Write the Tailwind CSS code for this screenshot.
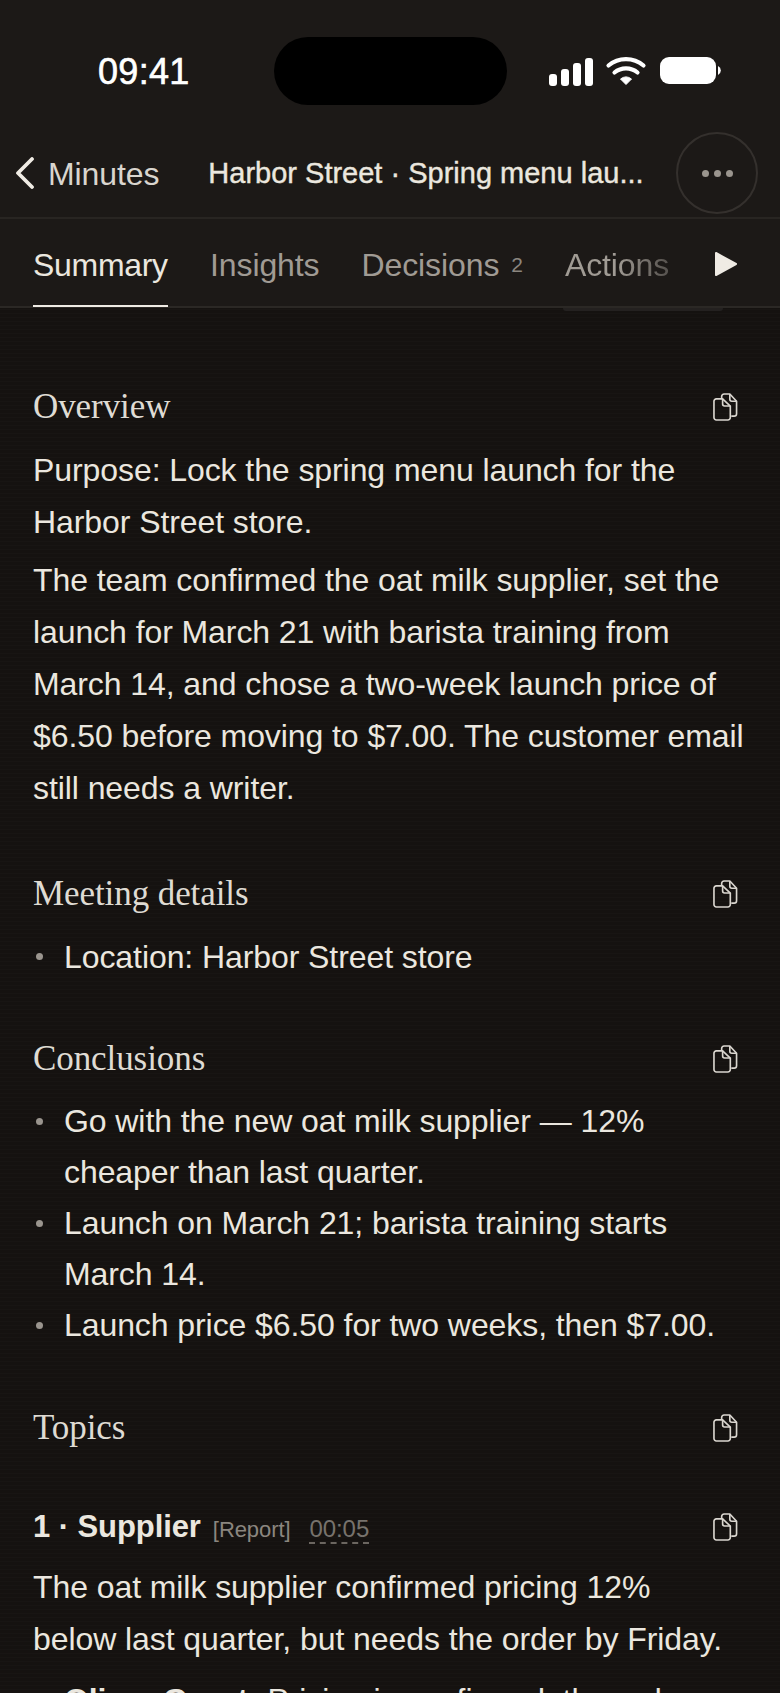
<!DOCTYPE html>
<html lang="en">
<head>
  <meta charset="UTF-8" />
  <meta name="viewport" content="width=device-width, initial-scale=1" />
  <title>Harbor Street · Spring menu launch</title>
  <script src="https://cdn.jsdelivr.net/npm/@tailwindcss/browser@4"></script>
</head>
<body class="bg-[#151210] text-[#ebe7df] font-['Liberation_Sans',sans-serif] h-[1693px] w-[780px] overflow-hidden">
  <svg class="hidden">
    <symbol id="copy" viewBox="0 0 26 30" fill="none" stroke="currentColor" stroke-width="1.7" stroke-linejoin="round">
      <path d="M9 6V4a2.5 2.5 0 0 1 2.5-2.5h6L24.5 9v13a2.5 2.5 0 0 1-2.5 2.5h-3" />
      <path d="M17.5 1.5V7a2 2 0 0 0 2 2h5" />
      <path d="M3.5 6.5H10L18 14v12a2.5 2.5 0 0 1-2.5 2.5h-12A2.5 2.5 0 0 1 1 26V9a2.5 2.5 0 0 1 2.5-2.5z" />
      <path d="M10 6.5V12a2 2 0 0 0 2 2h6" />
    </symbol>
  </svg>

  <!-- Header -->
  <header class="relative bg-[#1c1917]">
    <div class="relative h-[132px]">
      <span class="absolute left-[98px] top-[51px] text-[36px] leading-[42px] tracking-[0.3px] [-webkit-text-stroke:0.6px_#ffffff] text-white">09:41</span>
      <div class="absolute left-[274px] top-[37px] w-[233px] h-[68px] rounded-full bg-black"></div>
      <svg class="absolute left-[548px] top-[56px]" width="176" height="32" viewBox="0 0 176 32" fill="white">
        <rect x="1" y="18" width="8" height="12" rx="3" />
        <rect x="13" y="13" width="8" height="17" rx="3" />
        <rect x="25" y="7" width="8" height="23" rx="3" />
        <rect x="37" y="2" width="8" height="28" rx="3" />
        <path d="M60.5 9.5a27 27 0 0 1 35 0" fill="none" stroke="white" stroke-width="4.2" stroke-linecap="round" />
        <path d="M66.5 16.5a18 18 0 0 1 23 0" fill="none" stroke="white" stroke-width="4.2" stroke-linecap="round" />
        <path d="M72.5 23a9 9 0 0 1 11 0l-5.5 5.5z" stroke="white" stroke-width="1" stroke-linejoin="round" />
        <rect x="112" y="1" width="56" height="27" rx="9" />
        <path d="M170 10a5 5 0 0 1 0 9z" />
      </svg>
    </div>
    <nav class="relative flex items-center h-[87px] pb-[1px] border-b-2 border-[#282522]">
      <svg class="ml-[15px] mb-[2px]" width="20" height="32" viewBox="0 0 20 32" fill="none" stroke="#efebe4" stroke-width="3.8" stroke-linecap="round" stroke-linejoin="round"><path d="M17 2 3 16l14 14" /></svg>
      <span class="ml-[13px] text-[32px] tracking-[-0.1px] text-[#d9d5ce]">Minutes</span>
      <span class="ml-[49px] text-[29px] [-webkit-text-stroke:0.4px_#ebe7df] text-[#ebe7df] w-[434px] whitespace-nowrap">Harbor Street · Spring menu lau...</span>
      <div class="absolute left-[676px] top-[0px] w-[82px] h-[82px] rounded-full border-2 border-[#34302d] flex items-center justify-center gap-[5px]">
        <i class="w-[7px] h-[7px] rounded-full bg-[#9a958e]"></i>
        <i class="w-[7px] h-[7px] rounded-full bg-[#9a958e]"></i>
        <i class="w-[7px] h-[7px] rounded-full bg-[#9a958e]"></i>
      </div>
    </nav>
    <div class="relative flex items-start h-[89px] pl-[33px] border-b-2 border-[#2b2825] tracking-[-0.1px]">
      <div class="h-[88px] w-[135px] pt-[28px] border-b-2 border-[#efebe4] text-[32px] leading-[36px] tracking-[-0.3px] whitespace-nowrap shrink-0">Summary</div>
      <div class="ml-[42px] pt-[28px] text-[32px] leading-[36px] text-[#a09b94]">Insights</div>
      <div class="ml-[42px] pt-[28px] text-[32px] leading-[36px] text-[#a09b94]">Decisions</div>
      <div class="ml-[12px] pt-[33px] text-[21px] leading-[26px] text-[#8b867f]">2</div>
      <div class="ml-[42px] mt-[28px] text-[32px] leading-[36px] text-transparent bg-clip-text bg-linear-to-r from-[#a09b94] from-50% to-[#55514d]">Actions</div>
      <svg class="absolute left-[714px] top-[32px]" width="24" height="26" viewBox="0 0 24 26" fill="#efebe4" stroke="#efebe4" stroke-width="2" stroke-linejoin="round"><path d="M2 2 22 13 2 24z" /></svg>
    </div>
    <div class="absolute left-[563px] top-[308px] w-[160px] h-[3px] rounded-b-full bg-[#242120]"></div>
  </header>

  <!-- Content -->
  <main class="h-[1385px] overflow-hidden pl-[33px] pr-[34px] pt-[75px] tracking-[-0.08px] bg-[repeating-linear-gradient(0deg,#151210_0,#151210_3px,#181513_3px,#181513_4px)]">
    <section class="relative">
      <h2 class="font-['Liberation_Serif',serif] text-[35px] leading-[48px] text-[#dfdbd3]">Overview</h2>
      <svg class="absolute left-[680px] top-[9px] text-[#dad6cf]" width="25" height="30"><use href="#copy" /></svg>
      <p class="mt-[13px] text-[32px] leading-[52px]">Purpose: Lock the spring menu launch for the Harbor Street store.</p>
      <p class="mt-[6px] text-[32px] leading-[52px]">The team confirmed the oat milk supplier, set the launch for March 21 with barista training from March 14, and chose a two-week launch price of $6.50 before moving to $7.00. The customer email still needs a writer.</p>
    </section>

    <section class="relative mt-[56px]">
      <h2 class="font-['Liberation_Serif',serif] text-[35px] leading-[48px] text-[#dfdbd3]">Meeting details</h2>
      <svg class="absolute left-[680px] top-[9px] text-[#dad6cf]" width="25" height="30"><use href="#copy" /></svg>
      <ul class="mt-[13px] text-[32px] leading-[52px]">
        <li class="relative pl-[31px]"><span class="absolute left-[3px] top-[22px] w-[7px] h-[7px] rounded-full bg-[#9a958e]"></span>Location: Harbor Street store</li>
      </ul>
    </section>

    <section class="relative mt-[52px]">
      <h2 class="font-['Liberation_Serif',serif] text-[35px] leading-[48px] text-[#dfdbd3]">Conclusions</h2>
      <svg class="absolute left-[680px] top-[9px] text-[#dad6cf]" width="25" height="30"><use href="#copy" /></svg>
      <ul class="mt-[13px] text-[32px] leading-[51px]">
        <li class="relative pl-[31px]"><span class="absolute left-[3px] top-[22px] w-[7px] h-[7px] rounded-full bg-[#9a958e]"></span>Go with the new oat milk supplier — 12% cheaper than last quarter.</li>
        <li class="relative pl-[31px]"><span class="absolute left-[3px] top-[22px] w-[7px] h-[7px] rounded-full bg-[#9a958e]"></span>Launch on March 21; barista training starts March 14.</li>
        <li class="relative pl-[31px]"><span class="absolute left-[3px] top-[22px] w-[7px] h-[7px] rounded-full bg-[#9a958e]"></span>Launch price $6.50 for two weeks, then $7.00.</li>
      </ul>
    </section>

    <section class="relative mt-[53px]">
      <h2 class="font-['Liberation_Serif',serif] text-[35px] leading-[48px] text-[#dfdbd3]">Topics</h2>
      <svg class="absolute left-[680px] top-[9px] text-[#dad6cf]" width="25" height="30"><use href="#copy" /></svg>
    </section>

    <section class="relative mt-[51px]">
      <div class="flex items-baseline h-[48px] leading-[48px]">
        <h3 class="text-[31px] font-bold">1 · Supplier</h3>
        <span class="ml-[12px] text-[22px] text-[#8b867f]">[Report]</span>
        <span class="ml-[19px] text-[24px] leading-[26px] text-[#77726c] border-b-2 border-dashed border-[#6b6660]">00:05</span>
      </div>
      <svg class="absolute left-[680px] top-[9px] text-[#dad6cf]" width="25" height="30"><use href="#copy" /></svg>
      <p class="mt-[10px] max-w-[700px] text-[32px] leading-[52px]">The oat milk supplier confirmed pricing 12% below last quarter, but needs the order by Friday.</p>
      <ul class="mt-[9px] text-[32px] leading-[52px]">
        <li class="relative pl-[31px]"><span class="absolute left-[3px] top-[22px] w-[7px] h-[7px] rounded-full bg-[#9a958e]"></span><b class="font-bold">Oliver Grant:</b> Pricing is confirmed; the order has to go in by Friday.</li>
      </ul>
    </section>
  </main>
</body>
</html>
